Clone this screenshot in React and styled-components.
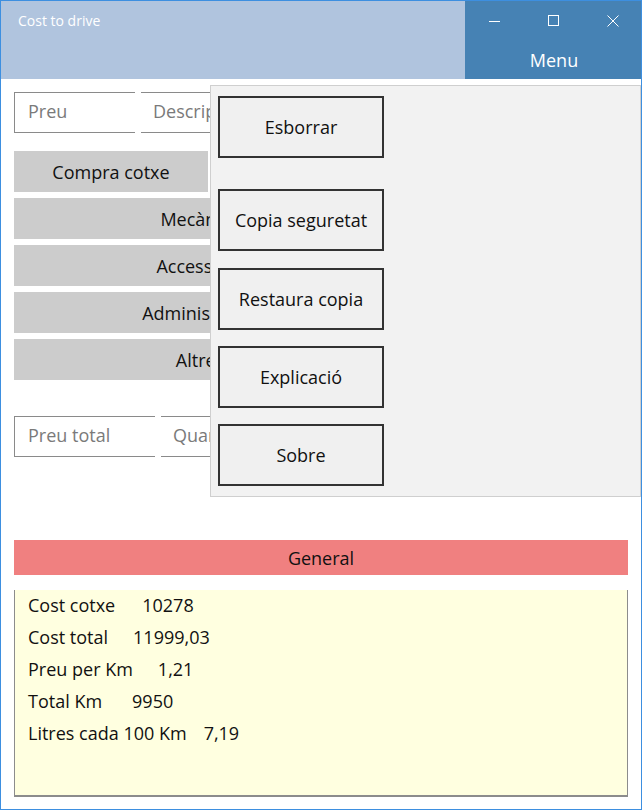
import styled, { createGlobalStyle } from 'styled-components'

const GlobalStyle = createGlobalStyle`
    html, body {
        margin: 0;
        padding: 0;
        background: #ffffff;
    }
    body {
        font-family: "Open Sans", "Noto Sans", sans-serif;
    }
`

const categories = [
    { label: 'Compra cotxe', width: 194 },
    { label: 'Mecànica', width: 372 },
    { label: 'Accessoris', width: 372 },
    { label: 'Administració', width: 372 },
    { label: 'Altres', width: 372 },
]

// gap below each entry of the menu flyout
const menuItems = [
    { label: 'Esborrar', gap: 31 },
    { label: 'Copia seguretat', gap: 17 },
    { label: 'Restaura copia', gap: 16 },
    { label: 'Explicació', gap: 16 },
    { label: 'Sobre', gap: 0 },
]

const summary = [
    { label: 'Cost cotxe', value: '10278', gap: 27 },
    { label: 'Cost total', value: '11999,03', gap: 25 },
    { label: 'Preu per Km', value: '1,21', gap: 25 },
    { label: 'Total Km', value: '9950', gap: 30 },
    { label: 'Litres cada 100 Km', value: '7,19', gap: 17 },
]

function App() {
    return (
        <>
            <GlobalStyle />
            <Window>
                <TitleBar>
                    <Caption>Cost to drive</Caption>
                    <MenuArea>
                        <Controls>
                            <ControlButton>
                                <svg width="12" height="12" viewBox="0 0 12 12">
                                    <path d="M0 6.5h11" stroke="#fff" strokeWidth="1" />
                                </svg>
                            </ControlButton>
                            <ControlButton>
                                <svg width="12" height="12" viewBox="0 0 12 12">
                                    <rect x="0.5" y="0.5" width="10" height="10" fill="none" stroke="#fff" strokeWidth="1" />
                                </svg>
                            </ControlButton>
                            <ControlButton>
                                <svg width="12" height="12" viewBox="0 0 12 12">
                                    <path d="M0.5 0.5l11 11M11.5 0.5l-11 11" stroke="#fff" strokeWidth="1" />
                                </svg>
                            </ControlButton>
                        </Controls>
                        <MenuLabel>Menu</MenuLabel>
                    </MenuArea>
                </TitleBar>

                <Content>
                    <InputRow>
                        <Field $first $width={121}>Preu</Field>
                        <Field $width={200}>Descripció</Field>
                    </InputRow>

                    <Categories>
                        {categories.map(c => (
                            <CategoryButton key={c.label} $width={c.width}>{c.label}</CategoryButton>
                        ))}
                    </Categories>

                    <InputRow $top={36}>
                        <Field $first $width={141}>Preu total</Field>
                        <Field $width={200}>Quantitat</Field>
                    </InputRow>

                    <SectionHeader>General</SectionHeader>
                    <SummaryPanel>
                        {summary.map(s => (
                            <SummaryLine key={s.label} $gap={s.gap}>
                                <span>{s.label}</span>
                                <span>{s.value}</span>
                            </SummaryLine>
                        ))}
                    </SummaryPanel>

                    <Flyout>
                        {menuItems.map(item => (
                            <FlyoutButton key={item.label} $gap={item.gap}>{item.label}</FlyoutButton>
                        ))}
                    </Flyout>
                </Content>
            </Window>
        </>
    )
}

export default App

const Window = styled.div`
    width: 642px;
    height: 810px;
    box-sizing: border-box;
    border: 1px solid #3d8fe0;
    display: flex;
    flex-direction: column;
    background: #ffffff;
`

const TitleBar = styled.div`
    display: flex;
    height: 78px;
    flex-shrink: 0;
`

const Caption = styled.div`
    flex: 1;
    background: #b0c4de;
    color: #ffffff;
    font-size: 14px;
    padding: 10px 0 0 17px;
`

const MenuArea = styled.div`
    width: 176px;
    background: #4682b4;
    display: flex;
    flex-direction: column;
    align-items: center;
`

const Controls = styled.div`
    display: flex;
    width: 100%;
    height: 40px;
`

const ControlButton = styled.div`
    flex: 1;
    display: flex;
    align-items: center;
    justify-content: center;
    padding-left: 2px;
`

const MenuLabel = styled.div`
    color: #ffffff;
    font-size: 18px;
    line-height: 1;
    margin-top: 10px;
    padding-left: 2px;
`

const Content = styled.div`
    position: relative;
    flex: 1;
    display: flex;
    flex-direction: column;
    padding: 13px 13px 11px 13px;
`

const InputRow = styled.div`
    display: flex;
    gap: 6px;
    margin-top: ${p => p.$top || 0}px;
`

const Field = styled.div`
    width: ${p => p.$width}px;
    height: 41px;
    flex-shrink: 0;
    box-sizing: border-box;
    border-top: 1px solid #8a8a8a;
    border-bottom: 1px solid #8a8a8a;
    border-left: ${p => (p.$first ? '1px solid #8a8a8a' : 'none')};
    padding: 0 0 3px ${p => (p.$first ? 13 : 12)}px;
    display: flex;
    align-items: center;
    color: #7a7a7a;
    font-size: 18px;
    white-space: nowrap;
    overflow: hidden;
`

const Categories = styled.div`
    display: flex;
    flex-direction: column;
    gap: 6px;
    margin-top: 18px;
`

const CategoryButton = styled.div`
    width: ${p => p.$width}px;
    height: 41px;
    flex-shrink: 0;
    background: #cccccc;
    display: flex;
    align-items: center;
    justify-content: center;
    color: #111111;
    font-size: 18px;
`

const SectionHeader = styled.div`
    margin-top: 83px;
    height: 35px;
    flex-shrink: 0;
    background: #f08080;
    display: flex;
    align-items: center;
    justify-content: center;
    color: #111111;
    font-size: 18px;
`

const SummaryPanel = styled.div`
    margin-top: 15px;
    height: 207px;
    flex-shrink: 0;
    box-sizing: border-box;
    background: #ffffe0;
    border: 1px solid #8c8c8c;
    border-top: none;
    border-bottom-width: 2px;
    padding: 0 0 0 13px;
    display: flex;
    flex-direction: column;
`

const SummaryLine = styled.div`
    height: 32px;
    padding-bottom: 3px;
    box-sizing: border-box;
    display: flex;
    align-items: center;
    gap: ${p => p.$gap}px;
    color: #111111;
    font-size: 18px;
`

const Flyout = styled.div`
    position: absolute;
    top: 6px;
    left: 209px;
    right: 0;
    height: 412px;
    box-sizing: border-box;
    background: #f2f2f2;
    border: 1px solid #cfcfcf;
    padding: 10px 0 0 7px;
    display: flex;
    flex-direction: column;
    align-items: flex-start;
`

const FlyoutButton = styled.div`
    width: 166px;
    height: 62px;
    flex-shrink: 0;
    box-sizing: border-box;
    border: 2px solid #333333;
    background: #f0f0f0;
    display: flex;
    align-items: center;
    justify-content: center;
    color: #111111;
    font-size: 18px;
    margin-bottom: ${p => p.$gap}px;
`
